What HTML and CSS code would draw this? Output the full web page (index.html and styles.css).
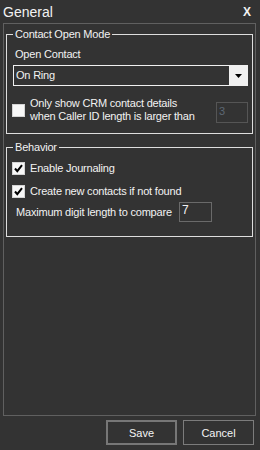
FILE: index.html
```html
<!DOCTYPE html>
<html lang="en">
<head>
    <meta charset="UTF-8">
    <meta name="viewport" content="width=device-width, initial-scale=1.0">
    <title>General</title>
    <link rel="stylesheet" href="styles.css">
</head>
<body>
    <div class="dialog">
        <div class="titlebar">
            <span class="title">General</span>
            <span class="close">X</span>
        </div>

        <div class="panel">
            <!-- Contact open mode -->
            <fieldset class="group group-open">
                <legend>Contact Open Mode</legend>
                <div class="field-label">Open Contact</div>
                <div class="combo">
                    <span class="combo-value">On Ring</span>
                    <span class="combo-btn">
                        <svg width="7" height="4" viewBox="0 0 7 4"><path d="M0 0 H7 L3.5 4 Z" fill="#000"/></svg>
                    </span>
                </div>
                <div class="check-row check-row-wrap">
                    <span class="checkbox"></span>
                    <span class="check-text">Only show CRM contact details<br>when Caller ID length is larger than</span>
                    <span class="num-input num-input-disabled">3</span>
                </div>
            </fieldset>

            <!-- Behavior -->
            <fieldset class="group group-behavior">
                <legend>Behavior</legend>
                <div class="check-row first">
                    <span class="checkbox checked">
                        <svg width="13" height="13" viewBox="0 0 13 13"><path d="M3 6.5 L5.3 9.2 L10 3.2" fill="none" stroke="#000" stroke-width="2"/></svg>
                    </span>
                    <span class="check-text">Enable Journaling</span>
                </div>
                <div class="check-row second">
                    <span class="checkbox checked">
                        <svg width="13" height="13" viewBox="0 0 13 13"><path d="M3 6.5 L5.3 9.2 L10 3.2" fill="none" stroke="#000" stroke-width="2"/></svg>
                    </span>
                    <span class="check-text">Create new contacts if not found</span>
                </div>
                <div class="digit-row">
                    <span class="digit-label">Maximum digit length to compare</span>
                    <span class="num-input num-input-digit">7</span>
                </div>
            </fieldset>
        </div>

        <div class="buttons">
            <button class="btn btn-default">Save</button>
            <button class="btn">Cancel</button>
        </div>
    </div>
</body>
</html>
```

FILE: styles.css
```css
/* Basic styles */
body {
    margin: 0;
    padding: 0;
    background-color: #333333;
    color: #f2f2f2;
    font-family: "Liberation Sans", Arial, sans-serif;
    font-size: 11px;
    line-height: 13px;
    letter-spacing: -0.2px;
}
.dialog {
    width: 260px;
    height: 450px;
}

/* Title bar */
.titlebar {
    display: flex;
    justify-content: space-between;
    align-items: center;
    height: 23px;
    padding: 1px 9px 0 3px;
    box-sizing: border-box;
}
.title {
    font-size: 14px;
    line-height: 16px;
    letter-spacing: 0;
}
.close {
    font-size: 12px;
    font-weight: bold;
    letter-spacing: 0;
}

/* Main panel */
.panel {
    margin: 0 4px 0 3px;
    height: 393px;
    box-sizing: border-box;
    border: 1px solid #606060;
    padding-top: 4px;
}
.group {
    margin: 0 2px;
    padding: 0 4px;
    border: 1px solid #dedede;
    min-width: 0;
}
.group legend {
    margin-left: 2px;
    padding: 0 2px;
    line-height: 13px;
}
.group-open {
    padding-bottom: 10px;
}
.group-behavior {
    margin-top: 7px;
    padding-bottom: 14px;
}

.field-label {
    margin-top: 7px;
    padding-left: 4px;
}

/* Combo box */
.combo {
    display: flex;
    margin: 4px 0 0 2px;
    height: 21px;
    box-sizing: border-box;
    border: 1px solid #f0f0f0;
}
.combo-value {
    flex: 1;
    padding-left: 2px;
    align-self: center;
}
.combo-btn {
    width: 18px;
    display: flex;
    align-items: center;
    justify-content: center;
    background-color: #f0f0f0;
}

/* Check boxes */
.check-row {
    display: flex;
    align-items: center;
}
.check-row-wrap {
    margin-top: 11px;
}
.check-row.first {
    margin-top: 8px;
}
.check-row.second {
    margin-top: 10px;
}
.checkbox {
    width: 13px;
    height: 13px;
    margin-left: 1px;
    box-sizing: border-box;
    border: 1px solid #d4d4d4;
    background-color: #f7f7f7;
    flex-shrink: 0;
}
.checkbox svg {
    display: block;
    margin: -1px;
}
.check-text {
    margin-left: 5px;
}

/* Number inputs */
.num-input {
    box-sizing: border-box;
    border: 1px solid #6a6a6a;
    padding: 2px 2px 0;
}
.num-input-disabled {
    margin-left: auto;
    align-self: flex-start;
    margin-top: 5px;
    width: 32px;
    height: 21px;
    border-color: #555555;
    color: #5d6874;
}
.digit-row {
    display: flex;
    align-items: center;
    margin-top: 4px;
}
.digit-label {
    width: 168px;
    padding-left: 5px;
    box-sizing: border-box;
}
.num-input-digit {
    width: 33px;
    height: 20px;
    font-size: 12px;
    padding-top: 1px;
}

/* Buttons */
.buttons {
    display: flex;
    justify-content: flex-end;
    gap: 6px;
    margin-top: 4px;
    padding-right: 6px;
}
.btn {
    width: 71px;
    height: 25px;
    background-color: #333333;
    color: #f4f4f4;
    border: 1px solid #7c7c7c;
    font-family: "Liberation Sans", Arial, sans-serif;
    font-size: 11px;
    padding: 0;
}
.btn-default {
    border: 2px solid #777777;
}
```
